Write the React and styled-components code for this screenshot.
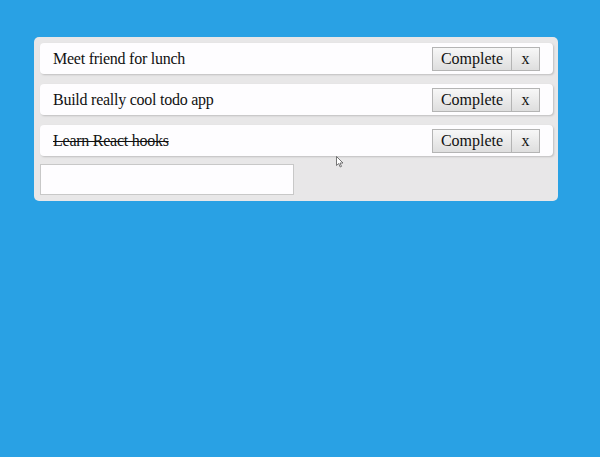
import React, { useState } from 'react';
import styled, { createGlobalStyle } from 'styled-components';

const GlobalStyle = createGlobalStyle`
  html, body {
    margin: 0;
    background: #29a1e4;
    font-family: "Liberation Serif", "Times New Roman", serif;
  }
`;

const Page = styled.div`
  min-height: 457px;
  padding: 37px 0 0 34px;
  box-sizing: border-box;
  position: relative;
`;

const TodoList = styled.div`
  width: 524px;
  box-sizing: border-box;
  background: #e8e7e8;
  border-radius: 5px;
  padding: 6px 5px 6px 6px;
  display: flex;
  flex-direction: column;
  gap: 10px;
`;

const Todo = styled.div`
  height: 31px;
  box-sizing: border-box;
  background: #fefdff;
  border-radius: 4px;
  box-shadow: 1px 1px 2px rgba(0, 0, 0, 0.18);
  display: flex;
  align-items: center;
  justify-content: space-between;
  padding: 1px 13px 0 13px;
  font-size: 16px;
  color: #111;
`;

const Label = styled.span`
  letter-spacing: -0.25px;
  text-decoration: ${(p) => (p.$done ? 'line-through' : 'none')};
`;

const Actions = styled.div`
  display: flex;
  margin-top: -1px;
`;

const Button = styled.button`
  height: 24px;
  box-sizing: border-box;
  padding: 0;
  width: ${(p) => (p.$narrow ? '28px' : '80px')};
  font-family: "Liberation Serif", "Times New Roman", serif;
  font-size: 16px;
  color: #111;
  background: linear-gradient(#f7f7f7, #dedede);
  border: 1px solid #b4b4b4;
  border-radius: 0;
  cursor: pointer;
  & + & {
    border-left: none;
  }
`;

const Input = styled.input`
  margin-top: -2px;
  width: 254px;
  height: 31px;
  box-sizing: border-box;
  border: 1px solid #c8c8c8;
  background: #fefdff;
  font-family: "Liberation Serif", "Times New Roman", serif;
  font-size: 16px;
  outline: none;
`;

const Cursor = styled.svg`
  position: absolute;
  left: 336px;
  top: 156px;
`;

export default function App() {
  const [todos, setTodos] = useState([
    { text: 'Meet friend for lunch', done: false },
    { text: 'Build really cool todo app', done: false },
    { text: 'Learn React hooks', done: true },
  ]);
  const [value, setValue] = useState('');

  const complete = (i) =>
    setTodos(todos.map((t, j) => (j === i ? { ...t, done: true } : t)));
  const remove = (i) => setTodos(todos.filter((_, j) => j !== i));

  return (
    <Page>
      <GlobalStyle />
      <TodoList>
        {todos.map((t, i) => (
          <Todo key={i}>
            <Label $done={t.done}>{t.text}</Label>
            <Actions>
              <Button onClick={() => complete(i)}>Complete</Button>
              <Button $narrow onClick={() => remove(i)}>x</Button>
            </Actions>
          </Todo>
        ))}
        <form
          onSubmit={(e) => {
            e.preventDefault();
            if (!value) return;
            setTodos([...todos, { text: value, done: false }]);
            setValue('');
          }}
        >
          <Input value={value} onChange={(e) => setValue(e.target.value)} />
        </form>
      </TodoList>
      <Cursor width="8" height="12" viewBox="0 0 8 12">
        <path d="M0.5 0.5 L0.5 9.5 L2.7 7.5 L4.2 11 L5.5 10.4 L4 7 L7 7 Z" fill="#fff" stroke="#555" strokeWidth="0.8" />
      </Cursor>
    </Page>
  );
}
